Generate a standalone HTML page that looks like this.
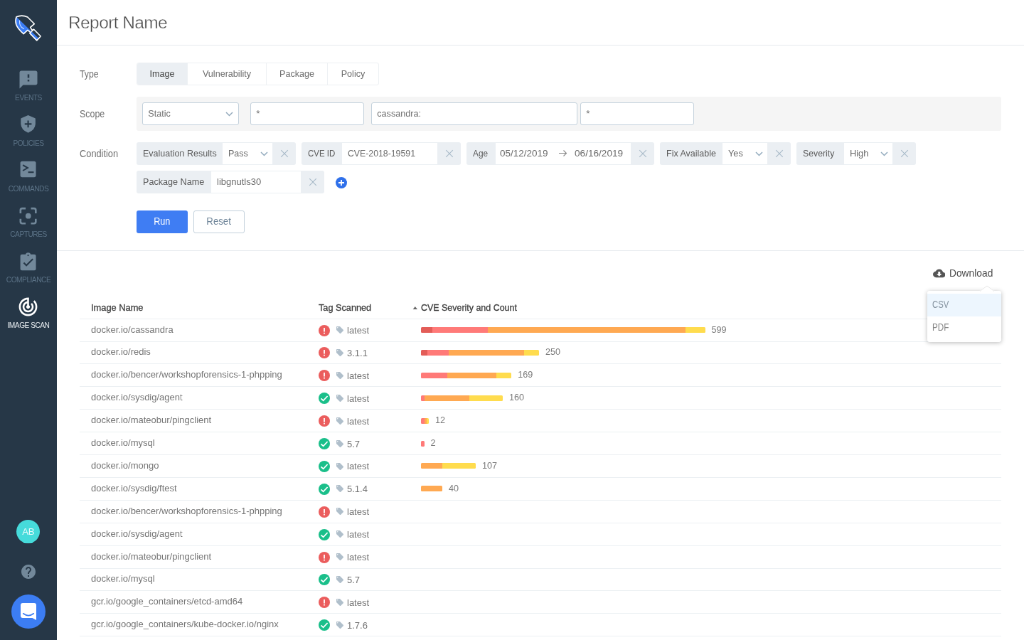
<!DOCTYPE html>
<html>
<head>
<meta charset="utf-8">
<title>Report Name</title>
<style>
*{box-sizing:border-box;margin:0;padding:0}
html,body{width:1024px;height:640px;overflow:hidden;background:#fff}
body{font-family:"Liberation Sans",sans-serif;color:#666}
#app{position:absolute;left:0;top:0;width:1440px;height:900px;transform:scale(0.711111);transform-origin:0 0;will-change:transform;background:#fff;overflow:hidden;font-size:13px}
.abs{position:absolute}
/* sidebar */
#side{position:absolute;left:0;top:0;width:80px;height:900px;background:#263747}
.nav{position:absolute;left:0;width:80px;text-align:center;font-size:10.2px;line-height:12px;color:#5b7286;letter-spacing:-0.5px;white-space:nowrap}
.nav.on{color:#e6ebef}
#side svg{position:absolute}
/* header */
#title{position:absolute;left:96px;top:15px;font-size:24.5px;letter-spacing:-0.6px;color:#484848;-webkit-text-stroke:0.4px #fff;line-height:34px;white-space:nowrap}
#hline{position:absolute;left:80px;top:62.6px;width:1360px;height:1px;background:#e6eaee}
.lbl{position:absolute;left:112px;font-size:14px;color:#707070;line-height:16px;margin-top:0px}
/* tabs */
#tabs{position:absolute;left:192px;top:88px;height:32px;display:flex;border:1px solid #edf0f3;border-radius:3px;overflow:hidden;background:#fff}
#tabs div{height:30px;line-height:30px;text-align:center;font-size:12.6px;color:#6c6c6c;border-right:1px solid #edf0f3}
#tabs div:last-child{border-right:0}
#tabs div.on{background:#ebeff3;color:#444}
/* scope */
#scope{position:absolute;left:192px;top:136px;width:1216px;height:48px;background:#f5f5f5;border-radius:3px}
.inp{position:absolute;top:8px;height:32px;background:#fff;border:1px solid #c3d1dc;border-radius:3px;font-size:12.6px;line-height:30px;padding-left:7.3px;color:#6e6e6e;white-space:nowrap}
/* chips */
.chip{position:absolute;height:32px;background:#ebeff3;border-radius:3px;font-size:13.6px;line-height:32px;white-space:nowrap}
.chip .k{position:absolute;left:9px;top:-0.4px;color:#5a5a5a}
.chip .v{position:absolute;top:1px;height:30px;background:#fff;line-height:29.4px;color:#6a6a6a;padding-left:7.5px}
.chip svg{position:absolute}
.sx{display:inline-block;transform-origin:0 50%;white-space:nowrap}
.sx.c{transform-origin:50% 50%}
.btn{position:absolute;top:296px;width:72px;height:32px;border-radius:3px;font-size:15px;line-height:29.4px;text-align:center}
#sep{position:absolute;left:80px;top:352.4px;width:1360px;height:1px;background:#e6eaee}
/* table */
.row{position:absolute;left:112px;width:1296px;height:32px;border-bottom:1px solid #ecf0f3;font-size:13px;line-height:30px;color:#757575;white-space:nowrap}
.row .n{position:absolute;left:16px;top:0}
.row .t{position:absolute;left:376px;top:1.5px}
.row .c{position:absolute;top:0;font-size:12.6px;color:#7a7a7a}
.row svg{position:absolute}
.bar{position:absolute;left:480px;top:11.5px;height:8px;display:flex;border-radius:1.5px;overflow:hidden}
.bar i{display:block;height:8px}
.r1{background:#e35d58}.r2{background:#ff7a78}.o{background:#ffa952}.y{background:#ffdc4e}
.th{position:absolute;top:416.7px;font-size:13px;line-height:32px;color:#3c3c3c;-webkit-text-stroke:0.3px #3c3c3c;white-space:nowrap}
/* dropdown */
#dd{position:absolute;left:1304px;top:409px;width:104px;height:72px;background:#fff;border-radius:3px;box-shadow:0 1px 6px rgba(0,0,0,.28)}
#dd div{position:absolute;left:0;width:104px;height:32px;line-height:32px;padding-left:7px;font-size:13.8px}
</style>
</head>
<body>
<div id="app">

<div id="side">
<!-- logo: drawn in 20x zoom coords of target region (12,12)-(44,44) -->
<svg style="left:16.9px;top:16.9px" width="45" height="45" viewBox="0 0 640 640">
 <defs><clipPath id="lowhalf"><path d="M60 70L620 612L0 640z"/></clipPath></defs>
 <g clip-path="url(#lowhalf)">
  <path d="M85 95Q200 50 310 100L445 235L365 305L310 360L230 435Q120 340 85 250Q60 170 85 95Z" fill="#3b7df5"/>
  <path d="M435 345L572 484L494 567L355 425Z" fill="#3b7df5"/>
  <path d="M365 305L415 365L375 405L310 360Z" fill="#3b7df5"/>
 </g>
 <path d="M85 95Q200 48 310 100L445 235L365 305L400 362L435 345L572 484L494 567L355 425L362 400L310 360L230 435Q115 340 82 250Q58 170 85 95Z" fill="none" stroke="#fff" stroke-width="23" stroke-linejoin="round"/>
 <path d="M435 345L355 425" stroke="#fff" stroke-width="16"/>
 <path d="M150 170Q140 290 235 335" fill="none" stroke="#cfe0ff" stroke-width="16" stroke-linecap="round"/>
</svg>
<!-- events -->
<svg style="left:25px;top:97px" width="30" height="30" viewBox="0 0 24 24"><path fill="#72889a" d="M20 2H4c-1.100 0-1.990.9-1.990 2L2 22l4-4h14c1.100 0 2-.9 2-2V4c0-1.100-.9-2-2-2zm-7 12h-2v-2h2v2zm0-4h-2V6h2v4z"/></svg>
<div class="nav" style="top:131.9px">EVENTS</div>
<!-- policies : 16x zoom coords of (8,105)-(48,145) -->
<svg style="left:11.25px;top:147.65px" width="56.25" height="56.25" viewBox="0 0 640 640"><path fill="#72889a" d="M325 158L213 208Q208 212 208 222V300Q214 400 325 440Q436 400 442 300V222Q442 212 437 208Z"/><path d="M325 245V355M270 300H380" stroke="#263747" stroke-width="24"/></svg>
<div class="nav" style="top:195.9px">POLICIES</div>
<!-- commands : 16x zoom coords of (8,150)-(48,190) -->
<svg style="left:11.25px;top:210.9px" width="56.25" height="56.25" viewBox="0 0 640 640"><rect x="200" y="180" width="250" height="255" rx="30" fill="#72889a"/><path d="M240 240L318 285L240 330" fill="none" stroke="#263747" stroke-width="22"/><path d="M325 355H415" stroke="#263747" stroke-width="24"/></svg>
<div class="nav" style="top:259.9px">COMMANDS</div>
<!-- captures : 16x zoom coords of (8,195)-(48,235) -->
<svg style="left:11.25px;top:274.2px" width="56.25" height="56.25" viewBox="0 0 640 640"><g fill="none" stroke="#72889a" stroke-width="30"><path d="M203 295V245Q203 218 230 218H285"/><path d="M370 218H420Q447 218 447 245V295"/><path d="M447 385V430Q447 458 420 458H370"/><path d="M285 458H230Q203 458 203 430V385"/></g><circle cx="327" cy="338" r="44" fill="#72889a"/></svg>
<div class="nav" style="top:323.9px">CAPTURES</div>
<!-- compliance : 16x zoom coords of (8,240)-(48,280) -->
<svg style="left:11.25px;top:337.5px" width="56.25" height="56.25" viewBox="0 0 640 640"><rect x="200" y="225" width="250" height="255" rx="26" fill="#72889a"/><circle cx="325" cy="238" r="42" fill="#72889a"/><circle cx="325" cy="240" r="13" fill="#263747"/><path d="M255 358L297 400L400 298" fill="none" stroke="#263747" stroke-width="24"/></svg>
<div class="nav" style="top:387.9px">COMPLIANCE</div>
<!-- image scan -->
<svg style="left:24.2px;top:416.2px" width="31" height="31" viewBox="0 0 24 24"><path fill="#fff" d="M19.07 4.93l-1.41 1.41C19.1 7.790 20 9.790 20 12c0 4.420-3.580 8-8 8s-8-3.580-8-8c0-4.080 3.050-7.440 7-7.930v2.020C8.160 6.570 6 9.030 6 12c0 3.310 2.690 6 6 6s6-2.690 6-6c0-1.660-.67-3.160-1.760-4.240l-1.410 1.410C15.550 9.900 16 10.900 16 12c0 2.210-1.790 4-4 4s-4-1.790-4-4c0-1.860 1.280-3.410 3-3.860v2.140c-.6.350-1 .98-1 1.720 0 1.100.9 2 2 2s2-.9 2-2c0-.74-.4-1.380-1-1.720V2h-1C6.480 2 2 6.480 2 12s4.480 10 10 10 10-4.480 10-10c0-2.760-1.120-5.260-2.930-7.070z"/></svg>
<div class="nav on" style="top:451.9px">IMAGE SCAN</div>
<!-- avatar -->
<div class="abs" style="left:23.2px;top:731px;width:33px;height:33px;border-radius:50%;background:#46dbdb;color:#e9fbfb;font-size:13.2px;line-height:33px;text-align:center;letter-spacing:-.3px">AB</div>
<!-- help -->
<svg style="left:28px;top:791.5px" width="24" height="24" viewBox="0 0 24 24"><path fill="#72889a" d="M12 2C6.480 2 2 6.480 2 12s4.480 10 10 10 10-4.480 10-10S17.520 2 12 2zm1 17h-2v-2h2v2zm2.070-7.750l-.9.920C13.450 12.900 13 13.500 13 15h-2v-.5c0-1.100.45-2.100 1.170-2.830l1.240-1.260c.37-.36.590-.86.590-1.410 0-1.100-.9-2-2-2s-2 .9-2 2H8c0-2.210 1.790-4 4-4s4 1.790 4 4c0 .880-.360 1.680-.930 2.250z"/></svg>
<!-- chat -->
<div class="abs" style="left:16px;top:835.5px;width:48px;height:48px;border-radius:50%;background:#3c7df3"></div>
<svg style="left:29px;top:848px" width="22" height="24" viewBox="0 0 22 24"><path fill="#fff" d="M3 0H19Q22 0 22 3V24L16.500 21H3Q0 21 0 18V3Q0 0 3 0Z"/><path d="M3.700 14.800Q11 20.300 18.300 14.800" fill="none" stroke="#3c7df3" stroke-width="1.700" stroke-linecap="round"/></svg>
</div>

<div id="title">Report Name</div>
<div id="hline"></div>

<div class="lbl" style="top:96px"><span class="sx" style="transform:scaleX(0.880)">Type</span></div>
<div class="lbl" style="top:152px"><span class="sx" style="transform:scaleX(0.889)">Scope</span></div>
<div class="lbl" style="top:208px"><span class="sx" style="transform:scaleX(0.915)">Condition</span></div>

<div id="tabs">
  <div class="on" style="width:71px">Image</div>
  <div style="width:111px">Vulnerability</div>
  <div style="width:86px">Package</div>
  <div style="width:71px">Policy</div>
</div>

<div id="scope">
  <div class="inp" style="left:8px;width:136px">Static<svg class="abs" style="left:116px;top:12px" width="11" height="7" viewBox="0 0 11 7"><path d="M1 1L5.5 5.500L10 1" stroke="#93a9bb" stroke-width="1.500" fill="none"/></svg></div>
  <div class="inp" style="left:160px;width:160px"><span style="position:relative;top:0px;font-size:13.5px">*</span></div>
  <div class="inp" style="left:330px;width:290px">cassandra:</div>
  <div class="inp" style="left:624px;width:160px"><span style="position:relative;top:0px;font-size:13.5px">*</span></div>
</div>

<div class="chip" style="left:192px;top:200px;width:224px"><span class="k"><span class="sx" style="transform:scaleX(0.921)">Evaluation Results</span></span><div class="v" style="left:121.3px;width:69.7px"><span class="sx" style="transform:scaleX(0.919)">Pass</span></div><svg style="left:174px;top:13px" width="11" height="7" viewBox="0 0 11 7"><path d="M1 1L5.5 5.5L10 1" stroke="#93abbe" stroke-width="1.45" fill="none"/></svg><svg style="right:10px;top:10px" width="12" height="12" viewBox="0 0 12 12"><path d="M1.2 1.2L10.8 10.8M10.8 1.2L1.2 10.8" stroke="#a9bbc9" stroke-width="1.15" fill="none"/></svg></div>
<div class="chip" style="left:424px;top:200px;width:224px"><span class="k"><span class="sx" style="transform:scaleX(0.845)">CVE ID</span></span><div class="v" style="left:57px;width:134px"><span class="sx" style="transform:scaleX(0.904)">CVE-2018-19591</span></div><svg style="right:10px;top:10px" width="12" height="12" viewBox="0 0 12 12"><path d="M1.2 1.2L10.8 10.8M10.8 1.2L1.2 10.8" stroke="#a9bbc9" stroke-width="1.15" fill="none"/></svg></div>
<div class="chip" style="left:656px;top:200px;width:264px"><span class="k"><span class="sx" style="transform:scaleX(0.872)">Age</span></span><div class="v" style="left:41px;width:190px"><span style="margin-left:-1.4px"><span class="sx" style="transform:scaleX(0.992)">05/12/2019</span></span><span style="position:absolute;left:111px"><span class="sx" style="transform:scaleX(1.002)">06/16/2019</span></span></div><svg style="right:10px;top:10px" width="12" height="12" viewBox="0 0 12 12"><path d="M1.2 1.2L10.8 10.8M10.8 1.2L1.2 10.8" stroke="#a9bbc9" stroke-width="1.15" fill="none"/></svg></div>
<div class="chip" style="left:928px;top:200px;width:184px"><span class="k"><span class="sx" style="transform:scaleX(0.920)">Fix Available</span></span><div class="v" style="left:88px;width:63px"><span class="sx" style="transform:scaleX(0.935)">Yes</span></div><svg style="left:134px;top:13px" width="11" height="7" viewBox="0 0 11 7"><path d="M1 1L5.5 5.5L10 1" stroke="#93abbe" stroke-width="1.45" fill="none"/></svg><svg style="right:10px;top:10px" width="12" height="12" viewBox="0 0 12 12"><path d="M1.2 1.2L10.8 10.8M10.8 1.2L1.2 10.8" stroke="#a9bbc9" stroke-width="1.15" fill="none"/></svg></div>
<div class="chip" style="left:1120px;top:200px;width:168px"><span class="k"><span class="sx" style="transform:scaleX(0.902)">Severity</span></span><div class="v" style="left:67px;width:68px"><span class="sx" style="transform:scaleX(0.943)">High</span></div><svg style="left:118px;top:13px" width="11" height="7" viewBox="0 0 11 7"><path d="M1 1L5.5 5.5L10 1" stroke="#93abbe" stroke-width="1.45" fill="none"/></svg><svg style="right:10px;top:10px" width="12" height="12" viewBox="0 0 12 12"><path d="M1.2 1.2L10.8 10.8M10.8 1.2L1.2 10.8" stroke="#a9bbc9" stroke-width="1.15" fill="none"/></svg></div>
<div class="chip" style="left:192px;top:240px;width:264px"><span class="k"><span class="sx" style="transform:scaleX(0.927)">Package Name</span></span><div class="v" style="left:105px;width:126px"><span class="sx" style="transform:scaleX(0.957)">libgnutls30</span></div><svg style="right:10px;top:10px" width="12" height="12" viewBox="0 0 12 12"><path d="M1.2 1.2L10.8 10.8M10.8 1.2L1.2 10.8" stroke="#a9bbc9" stroke-width="1.15" fill="none"/></svg></div>
<svg class="abs" style="left:472px;top:249px" width="16" height="16" viewBox="0 0 16 16"><circle cx="8" cy="8" r="8" fill="#2f70ea"/><path d="M8 4v8M4 8h8" stroke="#fff" stroke-width="1.8"/></svg>
<svg class="abs" style="left:785.3px;top:210px" width="13" height="11" viewBox="0 0 13 11"><path d="M1 5.5h10.5M7.5 1.5L11.5 5.5L7.5 9.5" stroke="#8a8a8a" stroke-width="1.1" fill="none"/></svg>
<div class="btn" style="left:192px;background:#3f7df3;color:#fff"><span class="sx c" style="transform:scaleX(0.843)">Run</span></div>
<div class="btn" style="left:272px;background:#fff;border:1px solid #c3d1dc;color:#6f8599;line-height:27.4px"><span class="sx c" style="transform:scaleX(0.879)">Reset</span></div>
<div id="sep"></div>

<div class="row" style="top:416.5px"></div>
<div class="th" style="left:128px"><span class="sx" style="transform:scaleX(0.987)">Image Name</span></div>
<div class="th" style="left:448px"><span class="sx" style="transform:scaleX(0.977)">Tag Scanned</span></div>
<svg class="abs" style="left:580.2px;top:430.6px" width="7.6" height="4.8" viewBox="0 0 7.6 4.8"><path d="M3.8 0L7.6 4.8H0z" fill="#666"/></svg>
<div class="th" style="left:592px"><span class="sx" style="transform:scaleX(0.957)">CVE Severity and Count</span></div>
<div class="row" style="top:448.5px"><span class="n">docker.io/cassandra</span><svg style="left:336px;top:8px" width="16" height="16" viewBox="0 0 16 16"><circle cx="8" cy="8" r="8" fill="#eb5d5d"/><path d="M7.1 4h1.8v5.4h-1.8zM7.1 10.7h1.8v1.7h-1.8z" fill="#fff"/></svg><svg style="left:359.5px;top:9.7px" width="12" height="12" viewBox="0 0 24 24"><path d="M21.41 11.58l-9-9C12.05 2.22 11.55 2 11 2H4c-1.1 0-2 .9-2 2v7c0 .55.22 1.05.59 1.42l9 9c.36.36.86.58 1.41.58.55 0 1.05-.22 1.41-.59l7-7c.37-.36.59-.86.59-1.41 0-.55-.23-1.06-.59-1.42zM5.5 7C4.67 7 4 6.33 4 5.5S4.670 4 5.5 4 7 4.670 7 5.500 6.330 7 5.500 7z" fill="#b0bfcb"/></svg><span class="t">latest</span><div class="bar"><i class="r1" style="width:15.5px"></i><i class="r2" style="width:78.0px"></i><i class="o" style="width:278.0px"></i><i class="y" style="width:28.0px"></i></div><span class="c" style="left:888.5px">599</span></div>
<div class="row" style="top:480.4px"><span class="n">docker.io/redis</span><svg style="left:336px;top:8px" width="16" height="16" viewBox="0 0 16 16"><circle cx="8" cy="8" r="8" fill="#eb5d5d"/><path d="M7.1 4h1.8v5.4h-1.8zM7.1 10.7h1.8v1.7h-1.8z" fill="#fff"/></svg><svg style="left:359.5px;top:9.7px" width="12" height="12" viewBox="0 0 24 24"><path d="M21.41 11.58l-9-9C12.05 2.22 11.55 2 11 2H4c-1.1 0-2 .9-2 2v7c0 .55.22 1.05.59 1.42l9 9c.36.36.86.58 1.41.58.55 0 1.05-.22 1.41-.59l7-7c.37-.36.59-.86.59-1.41 0-.55-.23-1.06-.59-1.42zM5.5 7C4.67 7 4 6.33 4 5.5S4.670 4 5.5 4 7 4.670 7 5.500 6.330 7 5.500 7z" fill="#b0bfcb"/></svg><span class="t">3.1.1</span><div class="bar"><i class="r1" style="width:8.5px"></i><i class="r2" style="width:30.0px"></i><i class="o" style="width:106.5px"></i><i class="y" style="width:21.0px"></i></div><span class="c" style="left:655.0px">250</span></div>
<div class="row" style="top:512.3px"><span class="n">docker.io/bencer/workshopforensics-1-phpping</span><svg style="left:336px;top:8px" width="16" height="16" viewBox="0 0 16 16"><circle cx="8" cy="8" r="8" fill="#eb5d5d"/><path d="M7.1 4h1.8v5.4h-1.8zM7.1 10.7h1.8v1.7h-1.8z" fill="#fff"/></svg><svg style="left:359.5px;top:9.7px" width="12" height="12" viewBox="0 0 24 24"><path d="M21.41 11.58l-9-9C12.05 2.22 11.55 2 11 2H4c-1.1 0-2 .9-2 2v7c0 .55.22 1.05.59 1.42l9 9c.36.36.86.58 1.41.58.55 0 1.05-.22 1.41-.59l7-7c.37-.36.59-.86.59-1.41 0-.55-.23-1.06-.59-1.42zM5.5 7C4.67 7 4 6.33 4 5.5S4.670 4 5.5 4 7 4.670 7 5.500 6.330 7 5.500 7z" fill="#b0bfcb"/></svg><span class="t">latest</span><div class="bar"><i class="r2" style="width:37.3px"></i><i class="o" style="width:68.6px"></i><i class="y" style="width:21.4px"></i></div><span class="c" style="left:616.3px">169</span></div>
<div class="row" style="top:544.2px"><span class="n">docker.io/sysdig/agent</span><svg style="left:336px;top:8px" width="16" height="16" viewBox="0 0 16 16"><circle cx="8" cy="8" r="8" fill="#1abf8a"/><path d="M3.5 8.4L6.6 11.3L12.6 5" stroke="#fff" stroke-width="1.8" fill="none"/></svg><svg style="left:359.5px;top:9.7px" width="12" height="12" viewBox="0 0 24 24"><path d="M21.41 11.58l-9-9C12.05 2.22 11.55 2 11 2H4c-1.1 0-2 .9-2 2v7c0 .55.22 1.05.59 1.42l9 9c.36.36.86.58 1.41.58.55 0 1.05-.22 1.41-.59l7-7c.37-.36.59-.86.59-1.41 0-.55-.23-1.06-.59-1.42zM5.5 7C4.67 7 4 6.33 4 5.5S4.670 4 5.5 4 7 4.670 7 5.500 6.330 7 5.500 7z" fill="#b0bfcb"/></svg><span class="t">latest</span><div class="bar"><i class="r2" style="width:4.6px"></i><i class="o" style="width:63.3px"></i><i class="y" style="width:47.0px"></i></div><span class="c" style="left:603.9px">160</span></div>
<div class="row" style="top:576.1px"><span class="n">docker.io/mateobur/pingclient</span><svg style="left:336px;top:8px" width="16" height="16" viewBox="0 0 16 16"><circle cx="8" cy="8" r="8" fill="#eb5d5d"/><path d="M7.1 4h1.8v5.4h-1.8zM7.1 10.7h1.8v1.7h-1.8z" fill="#fff"/></svg><svg style="left:359.5px;top:9.7px" width="12" height="12" viewBox="0 0 24 24"><path d="M21.41 11.58l-9-9C12.05 2.22 11.55 2 11 2H4c-1.1 0-2 .9-2 2v7c0 .55.22 1.05.59 1.42l9 9c.36.36.86.58 1.41.58.55 0 1.05-.22 1.41-.59l7-7c.37-.36.59-.86.59-1.41 0-.55-.23-1.06-.59-1.42zM5.5 7C4.67 7 4 6.33 4 5.5S4.670 4 5.5 4 7 4.670 7 5.500 6.330 7 5.500 7z" fill="#b0bfcb"/></svg><span class="t">latest</span><div class="bar"><i class="r2" style="width:4.6px"></i><i class="o" style="width:3.4px"></i><i class="y" style="width:2.9px"></i></div><span class="c" style="left:499.9px">12</span></div>
<div class="row" style="top:608.0px"><span class="n">docker.io/mysql</span><svg style="left:336px;top:8px" width="16" height="16" viewBox="0 0 16 16"><circle cx="8" cy="8" r="8" fill="#1abf8a"/><path d="M3.5 8.4L6.6 11.3L12.6 5" stroke="#fff" stroke-width="1.8" fill="none"/></svg><svg style="left:359.5px;top:9.7px" width="12" height="12" viewBox="0 0 24 24"><path d="M21.41 11.58l-9-9C12.05 2.22 11.55 2 11 2H4c-1.1 0-2 .9-2 2v7c0 .55.22 1.05.59 1.42l9 9c.36.36.86.58 1.41.58.55 0 1.05-.22 1.41-.59l7-7c.37-.36.59-.86.59-1.41 0-.55-.23-1.06-.59-1.42zM5.5 7C4.67 7 4 6.33 4 5.5S4.670 4 5.5 4 7 4.670 7 5.500 6.330 7 5.500 7z" fill="#b0bfcb"/></svg><span class="t">5.7</span><div class="bar"><i class="r2" style="width:4.6px"></i></div><span class="c" style="left:493.6px">2</span></div>
<div class="row" style="top:639.9px"><span class="n">docker.io/mongo</span><svg style="left:336px;top:8px" width="16" height="16" viewBox="0 0 16 16"><circle cx="8" cy="8" r="8" fill="#1abf8a"/><path d="M3.5 8.4L6.6 11.3L12.6 5" stroke="#fff" stroke-width="1.8" fill="none"/></svg><svg style="left:359.5px;top:9.7px" width="12" height="12" viewBox="0 0 24 24"><path d="M21.41 11.58l-9-9C12.05 2.22 11.55 2 11 2H4c-1.1 0-2 .9-2 2v7c0 .55.22 1.05.59 1.42l9 9c.36.36.86.58 1.41.58.55 0 1.05-.22 1.41-.59l7-7c.37-.36.59-.86.59-1.41 0-.55-.23-1.06-.59-1.42zM5.5 7C4.67 7 4 6.33 4 5.5S4.670 4 5.5 4 7 4.670 7 5.500 6.330 7 5.500 7z" fill="#b0bfcb"/></svg><span class="t">latest</span><div class="bar"><i class="o" style="width:30.0px"></i><i class="y" style="width:47.0px"></i></div><span class="c" style="left:566.0px">107</span></div>
<div class="row" style="top:671.8px"><span class="n">docker.io/sysdig/ftest</span><svg style="left:336px;top:8px" width="16" height="16" viewBox="0 0 16 16"><circle cx="8" cy="8" r="8" fill="#1abf8a"/><path d="M3.5 8.4L6.6 11.3L12.6 5" stroke="#fff" stroke-width="1.8" fill="none"/></svg><svg style="left:359.5px;top:9.7px" width="12" height="12" viewBox="0 0 24 24"><path d="M21.41 11.58l-9-9C12.05 2.22 11.55 2 11 2H4c-1.1 0-2 .9-2 2v7c0 .55.22 1.05.59 1.42l9 9c.36.36.86.58 1.41.58.55 0 1.05-.22 1.41-.59l7-7c.37-.36.59-.86.59-1.41 0-.55-.23-1.06-.59-1.42zM5.5 7C4.67 7 4 6.33 4 5.5S4.670 4 5.5 4 7 4.670 7 5.500 6.330 7 5.500 7z" fill="#b0bfcb"/></svg><span class="t">5.1.4</span><div class="bar"><i class="o" style="width:30.0px"></i></div><span class="c" style="left:519.0px">40</span></div>
<div class="row" style="top:703.7px"><span class="n">docker.io/bencer/workshopforensics-1-phpping</span><svg style="left:336px;top:8px" width="16" height="16" viewBox="0 0 16 16"><circle cx="8" cy="8" r="8" fill="#eb5d5d"/><path d="M7.1 4h1.8v5.4h-1.8zM7.1 10.7h1.8v1.7h-1.8z" fill="#fff"/></svg><svg style="left:359.5px;top:9.7px" width="12" height="12" viewBox="0 0 24 24"><path d="M21.41 11.58l-9-9C12.05 2.22 11.55 2 11 2H4c-1.1 0-2 .9-2 2v7c0 .55.22 1.05.59 1.42l9 9c.36.36.86.58 1.41.58.55 0 1.05-.22 1.41-.59l7-7c.37-.36.59-.86.59-1.41 0-.55-.23-1.06-.59-1.42zM5.5 7C4.67 7 4 6.33 4 5.5S4.670 4 5.5 4 7 4.670 7 5.500 6.330 7 5.500 7z" fill="#b0bfcb"/></svg><span class="t">latest</span></div>
<div class="row" style="top:735.6px"><span class="n">docker.io/sysdig/agent</span><svg style="left:336px;top:8px" width="16" height="16" viewBox="0 0 16 16"><circle cx="8" cy="8" r="8" fill="#1abf8a"/><path d="M3.5 8.4L6.6 11.3L12.6 5" stroke="#fff" stroke-width="1.8" fill="none"/></svg><svg style="left:359.5px;top:9.7px" width="12" height="12" viewBox="0 0 24 24"><path d="M21.41 11.58l-9-9C12.05 2.22 11.55 2 11 2H4c-1.1 0-2 .9-2 2v7c0 .55.22 1.05.59 1.42l9 9c.36.36.86.58 1.41.58.55 0 1.05-.22 1.41-.59l7-7c.37-.36.59-.86.59-1.41 0-.55-.23-1.06-.59-1.42zM5.5 7C4.67 7 4 6.33 4 5.5S4.670 4 5.5 4 7 4.670 7 5.500 6.330 7 5.500 7z" fill="#b0bfcb"/></svg><span class="t">latest</span></div>
<div class="row" style="top:767.5px"><span class="n">docker.io/mateobur/pingclient</span><svg style="left:336px;top:8px" width="16" height="16" viewBox="0 0 16 16"><circle cx="8" cy="8" r="8" fill="#eb5d5d"/><path d="M7.1 4h1.8v5.4h-1.8zM7.1 10.7h1.8v1.7h-1.8z" fill="#fff"/></svg><svg style="left:359.5px;top:9.7px" width="12" height="12" viewBox="0 0 24 24"><path d="M21.41 11.58l-9-9C12.05 2.22 11.55 2 11 2H4c-1.1 0-2 .9-2 2v7c0 .55.22 1.05.59 1.42l9 9c.36.36.86.58 1.41.58.55 0 1.05-.22 1.41-.59l7-7c.37-.36.59-.86.59-1.41 0-.55-.23-1.06-.59-1.42zM5.5 7C4.67 7 4 6.33 4 5.5S4.670 4 5.5 4 7 4.670 7 5.500 6.330 7 5.500 7z" fill="#b0bfcb"/></svg><span class="t">latest</span></div>
<div class="row" style="top:799.4px"><span class="n">docker.io/mysql</span><svg style="left:336px;top:8px" width="16" height="16" viewBox="0 0 16 16"><circle cx="8" cy="8" r="8" fill="#1abf8a"/><path d="M3.5 8.4L6.6 11.3L12.6 5" stroke="#fff" stroke-width="1.8" fill="none"/></svg><svg style="left:359.5px;top:9.7px" width="12" height="12" viewBox="0 0 24 24"><path d="M21.41 11.58l-9-9C12.05 2.22 11.55 2 11 2H4c-1.1 0-2 .9-2 2v7c0 .55.22 1.05.59 1.42l9 9c.36.36.86.58 1.41.58.55 0 1.05-.22 1.41-.59l7-7c.37-.36.59-.86.59-1.41 0-.55-.23-1.06-.59-1.42zM5.5 7C4.67 7 4 6.33 4 5.5S4.670 4 5.5 4 7 4.670 7 5.500 6.330 7 5.500 7z" fill="#b0bfcb"/></svg><span class="t">5.7</span></div>
<div class="row" style="top:831.3px"><span class="n">gcr.io/google_containers/etcd-amd64</span><svg style="left:336px;top:8px" width="16" height="16" viewBox="0 0 16 16"><circle cx="8" cy="8" r="8" fill="#eb5d5d"/><path d="M7.1 4h1.8v5.4h-1.8zM7.1 10.7h1.8v1.7h-1.8z" fill="#fff"/></svg><svg style="left:359.5px;top:9.7px" width="12" height="12" viewBox="0 0 24 24"><path d="M21.41 11.58l-9-9C12.05 2.22 11.55 2 11 2H4c-1.1 0-2 .9-2 2v7c0 .55.22 1.05.59 1.42l9 9c.36.36.86.58 1.41.58.55 0 1.05-.22 1.41-.59l7-7c.37-.36.59-.86.59-1.41 0-.55-.23-1.06-.59-1.42zM5.5 7C4.67 7 4 6.33 4 5.5S4.670 4 5.5 4 7 4.670 7 5.500 6.330 7 5.500 7z" fill="#b0bfcb"/></svg><span class="t">latest</span></div>
<div class="row" style="top:863.2px"><span class="n">gcr.io/google_containers/kube-docker.io/nginx</span><svg style="left:336px;top:8px" width="16" height="16" viewBox="0 0 16 16"><circle cx="8" cy="8" r="8" fill="#1abf8a"/><path d="M3.5 8.4L6.6 11.3L12.6 5" stroke="#fff" stroke-width="1.8" fill="none"/></svg><svg style="left:359.5px;top:9.7px" width="12" height="12" viewBox="0 0 24 24"><path d="M21.41 11.58l-9-9C12.05 2.22 11.55 2 11 2H4c-1.1 0-2 .9-2 2v7c0 .55.22 1.05.59 1.42l9 9c.36.36.86.58 1.41.58.55 0 1.05-.22 1.41-.59l7-7c.37-.36.59-.86.59-1.41 0-.55-.23-1.06-.59-1.42zM5.5 7C4.67 7 4 6.33 4 5.5S4.670 4 5.5 4 7 4.670 7 5.500 6.330 7 5.500 7z" fill="#b0bfcb"/></svg><span class="t">1.7.6</span></div>
<svg class="abs" style="left:1311.7px;top:376.8px" width="17.5" height="14.600" viewBox="0 0 24 20"><path d="M19.35 8.04C18.67 4.59 15.64 2 12 2 9.11 2 6.6 3.64 5.35 6.04 2.34 6.36 0 8.91 0 12c0 3.31 2.69 6 6 6h13c2.76 0 5-2.24 5-5 0-2.640-2.050-4.780-4.650-4.960zM17 11l-5 5-5-5h3V7h4v4h3z" fill="#555"/></svg>
<div class="abs" style="left:1335px;top:374px;font-size:15px;line-height:20px;color:#4a4a4a;white-space:nowrap"><span class="sx" style="transform:scaleX(0.919)">Download</span></div>
<div id="dd">
<svg class="abs" style="left:72px;top:-8px" width="24" height="9" viewBox="0 0 24 9"><path d="M0 9L12 0.5L24 9z" fill="#fff"/><path d="M2 8.5L12 1L22 8.5" stroke="rgba(0,0,0,.10)" stroke-width="1" fill="none"/></svg>
<div style="top:4px;background:#edf6fe;color:#84929f"><span class="sx" style="transform:scaleX(0.823)">CSV</span></div>
<div style="top:36px;color:#858585"><span class="sx" style="transform:scaleX(0.846)">PDF</span></div>
</div>
</div>
</body>
</html>
